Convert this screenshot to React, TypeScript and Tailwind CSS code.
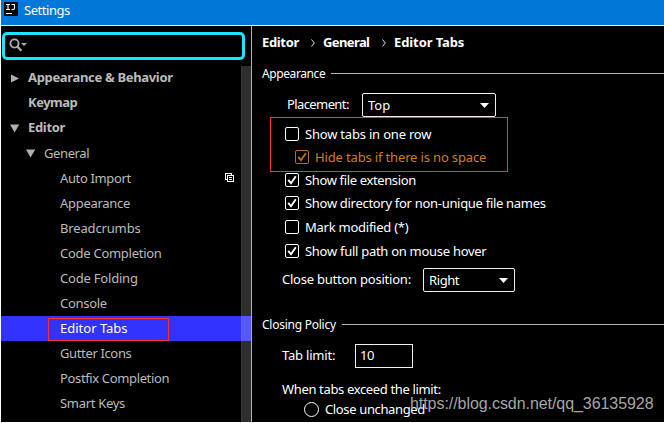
import type { ReactNode } from 'react';

type TreeItem = { label: string; level: number; arrow?: 'right' | 'down'; selected?: boolean; copy?: boolean; tracking?: string };

const tree: TreeItem[] = [
  { label: 'Appearance & Behavior', level: 0, arrow: 'right', tracking: 'tracking-[-0.33px]' },
  { label: 'Keymap', level: 0, tracking: 'tracking-[-0.5px]' },
  { label: 'Editor', level: 0, arrow: 'down', tracking: 'tracking-[-0.33px]' },
  { label: 'General', level: 1, arrow: 'down', tracking: 'tracking-[-0.4px]' },
  { label: 'Auto Import', level: 2, copy: true, tracking: 'tracking-[-0.36px]' },
  { label: 'Appearance', level: 2, tracking: 'tracking-[-0.3px]' },
  { label: 'Breadcrumbs', level: 2, tracking: 'tracking-[-0.15px]' },
  { label: 'Code Completion', level: 2, tracking: 'tracking-[-0.27px]' },
  { label: 'Code Folding', level: 2, tracking: 'tracking-[-0.2px]' },
  { label: 'Console', level: 2, tracking: 'tracking-[-0.29px]' },
  { label: 'Editor Tabs', level: 2, selected: true },
  { label: 'Gutter Icons', level: 2, tracking: 'tracking-[-0.36px]' },
  { label: 'Postfix Completion', level: 2, tracking: 'tracking-[-0.36px]' },
  { label: 'Smart Keys', level: 2, tracking: 'tracking-[-0.3px]' },
];

const indents = ['pl-[9px]', 'pl-[25px]', 'pl-[41px]'];

function Arrow({ dir }: { dir?: 'right' | 'down' }) {
  return (
    <svg className="w-[18px] h-[10px] shrink-0" viewBox="0 0 18 10" fill="#afafaf">
      {dir === 'right' && <path d="M1 .5 9 4.5 1 8.5z" />}
      {dir === 'down' && <path d="M0 .5h9.2L4.6 8.5z" />}
    </svg>
  );
}

function Row({ item }: { item: TreeItem }) {
  return (
    <div className={`relative flex h-[25px] items-center ${indents[item.level]} ${item.selected ? 'bg-[#3333ff] text-white' : 'text-[#bbbbbb]'} ${item.level === 0 ? 'font-bold' : ''}`}>
      <Arrow dir={item.arrow} />
      <span className={`leading-[25px] whitespace-nowrap ${item.level === 0 ? '-mt-0.5' : ''} ${item.tracking ?? ''}`}>{item.label}</span>
      {item.copy && (
        <svg className="ml-auto mr-[17px] w-[9px] h-[9px] -mt-0.5" viewBox="0 0 9 9" fill="none" stroke="#fff" shapeRendering="crispEdges">
          <path d="M2.5 6.5h-2v-6h6v2M2.5 2.5h6v6h-6zM4 4.5h3M4 6.5h3" />
        </svg>
      )}
      {item.selected && <span className="absolute left-[47px] top-[2px] h-[23px] w-[121px] border border-[#ff3030]" />}
    </div>
  );
}

function Check({ on, dim }: { on?: boolean; dim?: boolean }) {
  return (
    <svg className="w-[14px] h-[14px] shrink-0" viewBox="0 0 14 14" fill="none" stroke={dim ? '#b0702c' : '#fff'}>
      <rect x=".5" y=".5" width="13" height="13" rx="1.5" />
      {on && <path d="M3.2 6.8 6 10.2 10.8 3.2" strokeWidth="1.9" />}
    </svg>
  );
}

function Option({ on, dim, className, children }: { on?: boolean; dim?: boolean; className: string; children: ReactNode }) {
  return (
    <label className={`flex items-center gap-[6px] ${dim ? 'text-[#cd7f18]' : ''} ${className}`}>
      <Check on={on} dim={dim} />
      <span className="whitespace-nowrap leading-[14px]">{children}</span>
    </label>
  );
}

function Select({ value, className }: { value: string; className: string }) {
  return (
    <div className={`flex h-6 items-center justify-between rounded-[2px] border border-[#f0f0f0] pl-[5px] pr-[6px] ${className}`}>
      <span className="leading-[22px]">{value}</span>
      <svg className="w-[9px] h-[5px]" viewBox="0 0 9 5" fill="#fff"><path d="M0 0h9L4.5 5z" /></svg>
    </div>
  );
}

function Section({ title, className }: { title: string; className: string }) {
  return (
    <div className={`flex h-4 items-center ${className}`}>
      <span className="whitespace-nowrap text-[12px] leading-4">{title}</span>
      <span className="-mt-px h-px grow bg-[#b4b4b4]" />
    </div>
  );
}

function Chevron() {
  return (
    <svg className="h-2 w-1 shrink-0" viewBox="0 0 4 8" fill="none" stroke="#ddd">
      <path d="M.5.5 3.3 4 .5 7.5" />
    </svg>
  );
}

export default function App() {
  return (
    <div className="relative flex h-[423px] w-[664px] flex-col overflow-hidden border-b border-l border-white bg-black font-['Noto_Sans',sans-serif] text-[13px] text-white">
      <header className="flex h-[26px] shrink-0 items-center border-b border-[#e8f3fc] bg-[#0078d7] pl-[3px]">
        <svg className="-mt-[7px] h-[14px] w-[14px]" viewBox="0 0 14 14">
          <rect width="14" height="14" fill="#080808" />
          <path d="M2 2.5h4M4 2.5v5M2 7.5h4M7.5 2.5h3v3.5q0 1.5-1.5 1.5H7.5M2 11.5h6" fill="none" stroke="#fff" strokeWidth="1.1" />
        </svg>
        <span className="-mt-[5px] ml-[6px] leading-5 tracking-[-0.45px]">Settings</span>
      </header>
      <div className="flex h-[396px]">
        <aside className="flex w-[251px] shrink-0 flex-col border-r border-[#b4b4b4]">
          <div className="mt-[6px] ml-px flex h-7 w-[243px] shrink-0 items-center rounded-[5px] border-[3px] border-[#19e6ff] pl-1">
            <svg className="-mt-0.5 h-[14px] w-5" viewBox="0 0 20 14" fill="none" stroke="#afafaf">
              <circle cx="5.5" cy="5.5" r="4.1" strokeWidth="1.9" />
              <path d="m8.4 8.6 4.1 4.1" strokeWidth="2.2" />
              <path d="M12 5h6L15 8z" fill="#afafaf" stroke="none" />
            </svg>
          </div>
          <div className="relative mt-[6px]">
            {tree.map((item) => <Row key={item.label} item={item} />)}
            <div className="absolute top-0 right-0 h-[356px] w-[10px] border-l border-white/5 bg-white/[0.18]" />
          </div>
        </aside>
        <main className="relative flex grow flex-col pl-[10px]">
          <nav className="mt-[7px] flex h-5 items-center font-bold whitespace-nowrap">
            <span className="w-[49px] tracking-[-0.35px]">Editor</span>
            <Chevron />
            <span className="ml-[8px] w-[59px] tracking-[-0.6px]">General</span>
            <Chevron />
            <span className="ml-[8px] tracking-[-0.1px]">Editor Tabs</span>
          </nav>
          <Section title="Appearance" className="mt-[13px] gap-[6px] tracking-[-0.4px]" />
          <div className="mt-[11px] ml-[25px] flex h-6 items-center">
            <span className="w-[75px] tracking-[-0.6px]">Placement:</span>
            <Select value="Top" className="w-[134px]" />
          </div>
          <Option className="mt-[10px] ml-[23px] tracking-[-0.2px]">Show tabs in one row</Option>
          <Option on dim className="mt-[9px] ml-[33px] tracking-[-0.15px]">Hide tabs if there is no space</Option>
          <Option on className="mt-[9px] ml-[23px] tracking-[-0.36px]">Show file extension</Option>
          <Option on className="mt-[9px] ml-[23px] tracking-[-0.3px]">Show directory for non-unique file names</Option>
          <Option className="mt-[10px] ml-[23px] tracking-[-0.25px]">Mark modified (*)</Option>
          <Option on className="mt-[10px] ml-[23px] tracking-[-0.28px]">Show full path on mouse hover</Option>
          <div className="mt-[10px] ml-5 flex h-6 items-center">
            <span className="w-[141px] whitespace-nowrap tracking-[-0.23px]">Close button position:</span>
            <Select value="Right" className="w-[92px] tracking-[-0.4px]" />
          </div>
          <Section title="Closing Policy" className="mt-[25px] gap-[6px] tracking-[-0.25px]" />
          <div className="mt-[11px] ml-5 flex h-6 items-center">
            <span className="w-[73px] tracking-[-0.2px]">Tab limit:</span>
            <div className="flex h-6 w-[58px] items-center border border-[#f0f0f0] pl-1 tracking-[-0.4px]">10</div>
          </div>
          <span className="mt-[13px] ml-5 leading-4 tracking-[-0.35px]">When tabs exceed the limit:</span>
          <label className="mt-[4px] ml-[42px] flex h-4 items-center gap-[6px]">
            <span className="h-[15px] w-[15px] rounded-full border border-white" />
            <span className="leading-4 tracking-[-0.36px]">Close unchanged</span>
          </label>
          <div className="absolute top-[91px] left-[18px] h-[55px] w-[238px] border border-[#ff3030]" />
        </main>
      </div>
      <span className="absolute top-[394px] left-[409px] font-['Liberation_Sans',sans-serif] text-[16px] leading-5 whitespace-nowrap text-[#a6a6a6] tracking-[-0.06px]">https://blog.csdn.net/qq_36135928</span>
    </div>
  );
}
